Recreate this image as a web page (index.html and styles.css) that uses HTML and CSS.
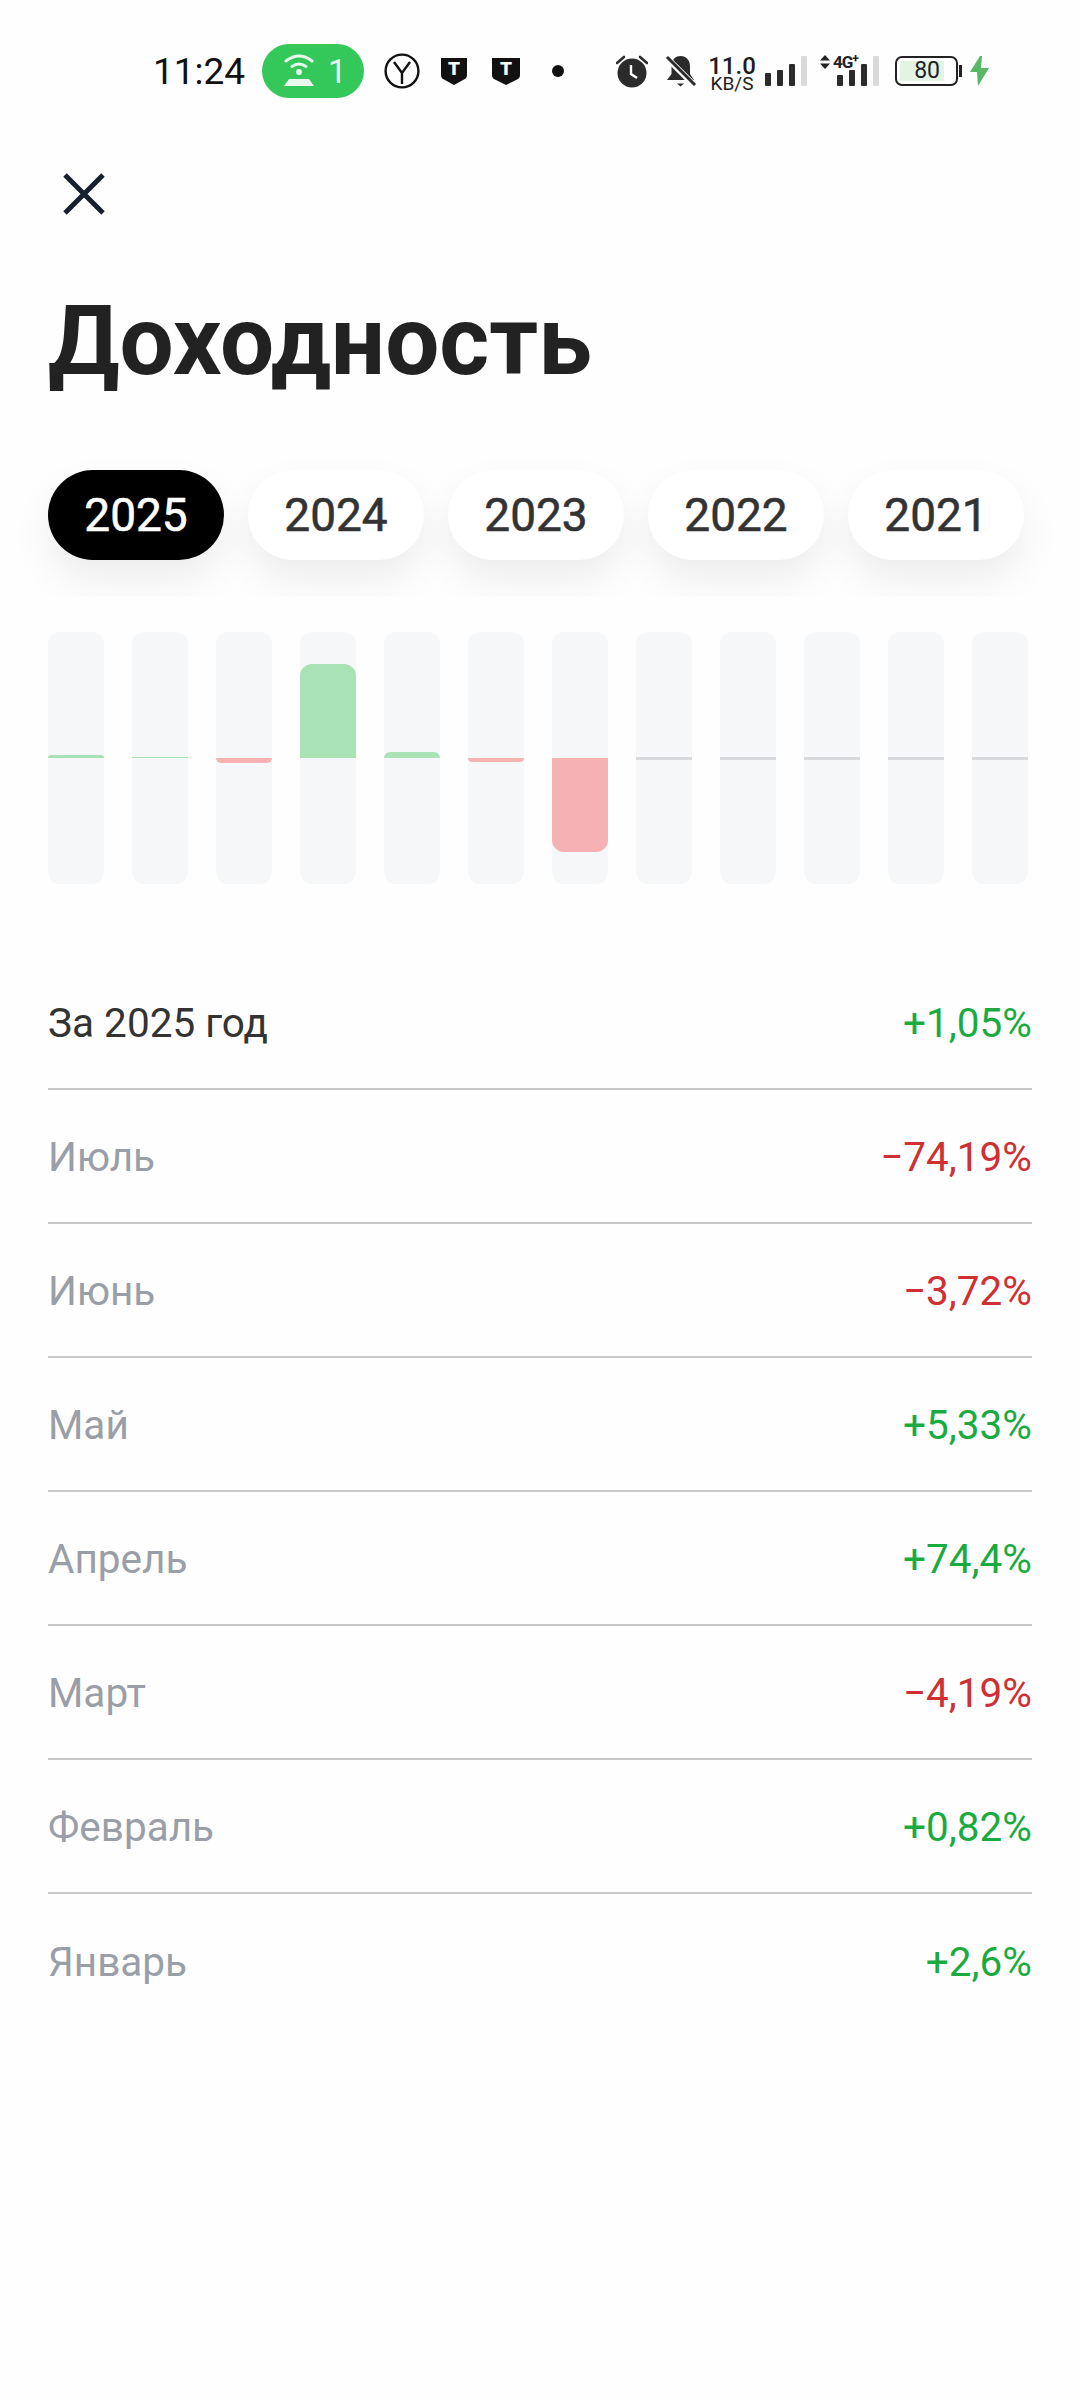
FILE: index.html
```html
<!DOCTYPE html>
<html lang="ru">
<head>
  <meta charset="UTF-8">
  <meta name="viewport" content="width=device-width, initial-scale=1.0">
  <title>Доходность</title>
  <link rel="stylesheet" href="styles.css">
</head>
<body>
  <!-- Статус-бар -->
  <div class="status-bar">
    <span class="time">11:24</span>
    <span class="hotspot">
      <svg width="32" height="34" viewBox="0 0 32 34" fill="none" stroke="#e8f8ec" stroke-width="3" stroke-linecap="round">
        <path d="M3 7Q16 -3 29 7"/>
        <path d="M9 12.500Q16 7.500 23 12.500"/>
        <circle cx="16" cy="18" r="3" fill="#e8f8ec" stroke="none"/>
        <path d="M1 32l5-7h20l5 7z" fill="#e8f8ec" stroke="none"/>
      </svg>
      <span>1</span>
    </span>
    <svg class="icon-yandex" width="36" height="36" viewBox="0 0 36 36" fill="none" stroke="#111" stroke-width="2.400">
      <circle cx="18" cy="18" r="16.400"/>
      <path d="M10 9l8 11 8-11M18 20v11"/>
    </svg>
    <svg class="icon-shield" width="26" height="27" viewBox="0 0 26 27">
      <path d="M0 0h26v17q0 3-3 4.500l-10 5.500-10-5.500q-3-1.500-3-4.500z" fill="#111"/>
      <text x="13" y="17" class="shield-t">T</text>
    </svg>
    <svg class="icon-shield second" width="28" height="27" viewBox="0 0 28 27">
      <path d="M0 0h28v17q0 3-3 4.500l-11 5.500-11-5.500q-3-1.500-3-4.500z" fill="#111"/>
      <text x="14" y="17" class="shield-t">T</text>
    </svg>
    <span class="dot"></span>

    <svg class="icon-alarm" width="32" height="34" viewBox="0 0 32 34" fill="none">
      <circle cx="16" cy="19" r="14.500" fill="#2b2b2b"/>
      <path d="M1 9l7-6M31 9l-7-6" stroke="#2b2b2b" stroke-width="2.600" stroke-linecap="round"/>
      <path d="M15 11v9l6 4" stroke="#fff" stroke-width="2.400"/>
    </svg>
    <svg class="icon-bell" width="32" height="34" viewBox="0 0 32 34" fill="none">
      <path d="M15.500 2c-6 0-9 4.500-9 10v8L2 26h27l-4-6v-8c0-5.500-3.500-10-9.500-10z" fill="#2b2b2b"/>
      <path d="M12 29.500h7l-3.500 3z" fill="#2b2b2b"/>
      <path d="M2 4l28 28" stroke="#fff" stroke-width="6"/>
      <path d="M2 3l28 28" stroke="#2b2b2b" stroke-width="3"/>
    </svg>
    <span class="net-speed"><b>11.0</b><i>KB/S</i></span>
    <span class="signal">
      <i class="h1"></i><i class="h2"></i><i class="h3"></i><i class="off"></i>
    </span>
    <span class="signal-4g">
      <span class="signal">
        <i class="h0"></i><i class="h2"></i><i class="h3"></i><i class="off"></i>
      </span>
      <svg width="10" height="14" viewBox="0 0 10 14"><path d="M5 0l5 5.500H0zM5 14L0 8.500h10z" fill="#222"/></svg>
      <span class="label-4g">4G<sup>+</sup></span>
    </span>
    <span class="battery">
      <span class="battery-body"><span class="battery-level">80</span></span>
      <span class="battery-nub"></span>
    </span>
    <svg class="icon-bolt" width="19" height="30" viewBox="0 0 19 30"><path d="M10 0L0 16h7l1 14L19 12h-8l1-12z" fill="#57b865"/></svg>
  </div>

  <!-- Заголовок -->
  <div class="close-btn">
    <svg width="42" height="42" viewBox="0 0 42 42" fill="none" stroke="#18202f" stroke-width="5">
      <path d="M2 2l38 38M40 2L2 40"/>
    </svg>
  </div>
  <h1 class="title">Доходность</h1>

  <!-- Годы -->
  <div class="years">
    <span class="year active">2025</span>
    <span class="year">2024</span>
    <span class="year">2023</span>
    <span class="year">2022</span>
    <span class="year">2021</span>
  </div>

  <!-- График по месяцам -->
  <div class="chart">
    <div class="track"><div class="half up"><div class="fill plus" style="height: 3px"></div></div><div class="half down"></div></div>
    <div class="track"><div class="half up"><div class="fill plus" style="height: 1px"></div></div><div class="half down"></div></div>
    <div class="track"><div class="half up"></div><div class="half down"><div class="fill minus" style="height: 5px"></div></div></div>
    <div class="track"><div class="half up"><div class="fill plus" style="height: 94px"></div></div><div class="half down"></div></div>
    <div class="track"><div class="half up"><div class="fill plus" style="height: 6px"></div></div><div class="half down"></div></div>
    <div class="track"><div class="half up"></div><div class="half down"><div class="fill minus" style="height: 4px"></div></div></div>
    <div class="track"><div class="half up"></div><div class="half down"><div class="fill minus" style="height: 94px"></div></div></div>
    <div class="track"><div class="half up"></div><div class="half down"><div class="fill empty"></div></div></div>
    <div class="track"><div class="half up"></div><div class="half down"><div class="fill empty"></div></div></div>
    <div class="track"><div class="half up"></div><div class="half down"><div class="fill empty"></div></div></div>
    <div class="track"><div class="half up"></div><div class="half down"><div class="fill empty"></div></div></div>
    <div class="track"><div class="half up"></div><div class="half down"><div class="fill empty"></div></div></div>
  </div>

  <!-- Список -->
  <div class="rows">
    <div class="row total"><span>За 2025 год</span><span class="green">+1,05%</span></div>
    <div class="row"><span>Июль</span><span class="red">−74,19%</span></div>
    <div class="row"><span>Июнь</span><span class="red">−3,72%</span></div>
    <div class="row"><span>Май</span><span class="green">+5,33%</span></div>
    <div class="row"><span>Апрель</span><span class="green">+74,4%</span></div>
    <div class="row"><span>Март</span><span class="red">−4,19%</span></div>
    <div class="row"><span>Февраль</span><span class="green">+0,82%</span></div>
    <div class="row"><span>Январь</span><span class="green">+2,6%</span></div>
  </div>
</body>
</html>
```

FILE: styles.css
```css
* {
  margin: 0;
  padding: 0;
  box-sizing: border-box;
}

body {
  font-family: 'Roboto', sans-serif;
  background-color: #fefefe;
  color: #333;
  width: 1080px;
  height: 2400px;
  overflow: hidden;
}

/* Статус-бар */
.status-bar {
  display: flex;
  align-items: center;
  height: 142px;
  padding-left: 153px;
  color: #111;
}

.time {
  width: 109px;
  font-size: 37px;
}

.hotspot {
  display: flex;
  align-items: center;
  gap: 13px;
  width: 102px;
  height: 54px;
  padding-left: 21px;
  border-radius: 27px;
  background-color: #34c759;
  color: #e8f8ec;
  font-size: 33px;
}

.icon-yandex {
  margin-left: 20px;
}

.icon-shield {
  margin-left: 21px;
}

.icon-shield.second {
  margin-left: 25px;
}

.shield-t {
  fill: #fff;
  font-family: 'Roboto', sans-serif;
  font-size: 19px;
  font-weight: 900;
  text-anchor: middle;
}

.dot {
  width: 12px;
  height: 12px;
  margin-left: 32px;
  border-radius: 50%;
  background-color: #111;
}

.icon-alarm {
  margin-left: 52px;
}

.icon-bell {
  margin-left: 17px;
}

.net-speed {
  display: flex;
  flex-direction: column;
  align-items: center;
  width: 44px;
  margin-left: 13px;
  color: #1c1c1c;
  line-height: 1;
}

.net-speed b {
  height: 20px;
  font-size: 24px;
  font-weight: 500;
}

.net-speed i {
  height: 15px;
  font-size: 19px;
  font-style: normal;
}

.signal {
  display: flex;
  align-items: flex-end;
  gap: 6px;
  height: 30px;
  margin-left: 11px;
}

.signal i {
  width: 6px;
  border-radius: 1px;
  background-color: #2b2b2b;
}

.signal .h0 {
  height: 11px;
}

.signal .h1 {
  height: 13px;
}

.signal .h2 {
  height: 16px;
}

.signal .h3 {
  height: 22px;
}

.signal .off {
  height: 30px;
  background-color: #d9d9d9;
}

/* 4G поверх столбиков */
.signal-4g {
  position: relative;
  width: 59px;
  height: 30px;
  margin-left: 13px;
}

.signal-4g .signal {
  margin-left: 17px;
}

.signal-4g svg {
  position: absolute;
  left: 0;
  top: -1px;
}

.label-4g {
  position: absolute;
  left: 13px;
  top: 0;
  font-size: 17px;
  font-weight: 700;
  line-height: 13px;
  letter-spacing: -1px;
  color: #222;
}

.label-4g sup {
  font-size: 12px;
  line-height: 0;
  vertical-align: 5px;
}

.battery {
  display: flex;
  align-items: center;
  gap: 1px;
  margin-left: 16px;
}

.battery-body {
  display: block;
  width: 63px;
  height: 30px;
  padding: 3px;
  border: 2px solid #222;
  border-radius: 7px;
}

.battery-level {
  display: block;
  width: 44px;
  height: 20px;
  padding-right: 4px;
  background-color: #e3f3e4;
  color: #222;
  font-size: 23px;
  line-height: 20px;
  text-align: right;
}

.battery-nub {
  width: 3px;
  height: 12px;
  background-color: #222;
}

.icon-bolt {
  margin-left: 8px;
}

/* Заголовок */
.close-btn {
  height: 44px;
  margin-top: 31px;
  margin-left: 63px;
}

.close-btn svg {
  display: block;
}

.title {
  margin: 59px 0 34px 48px;
  font-size: 96px;
  font-weight: 700;
  line-height: 130px;
  color: #222;
}

/* Годы */
.years {
  display: flex;
  gap: 24px;
  overflow: hidden;
  height: 156px;
  padding: 30px 48px 0;
}

.year {
  flex: 0 0 176px;
  height: 90px;
  border-radius: 45px;
  background-color: #fff;
  box-shadow: 0 20px 40px rgba(0, 0, 0, 0.07);
  font-size: 46px;
  line-height: 90px;
  text-align: center;
  color: #333;
  -webkit-text-stroke: 0.6px currentColor;
}

.year.active {
  background-color: #000;
  color: #fff;
}

/* График */
.chart {
  display: grid;
  grid-template-columns: repeat(12, 1fr);
  gap: 28px;
  width: 980px;
  height: 252px;
  margin: 36px 0 0 48px;
}

.track {
  display: flex;
  flex-direction: column;
  overflow: hidden;
  border-radius: 12px;
  background-color: #f5f7f8;
}

.half {
  display: flex;
  flex: 1;
}

.half.up {
  align-items: flex-end;
}

.half.down {
  align-items: flex-start;
}

.fill {
  width: 100%;
}

.fill.plus {
  border-radius: 12px 12px 0 0;
  background-color: #a9e2b5;
}

.fill.minus {
  border-radius: 0 0 12px 12px;
  background-color: #f5b1b4;
}

.fill.empty {
  height: 3px;
  margin-top: -1px;
  background-color: #d8d9dc;
}

/* Список */
.rows {
  margin: 72px 48px 0;
}

.row {
  display: flex;
  justify-content: space-between;
  align-items: center;
  height: 134px;
  padding-top: 2px;
  border-bottom: 2px solid #c8c8c8;
  font-size: 40.500px;
  color: #9a9ea6;
}

.row:last-child {
  border-bottom: none;
}

.row.total {
  color: #333;
}

.row .green {
  color: #1aab40;
}

.row .red {
  color: #cf3034;
}
```
